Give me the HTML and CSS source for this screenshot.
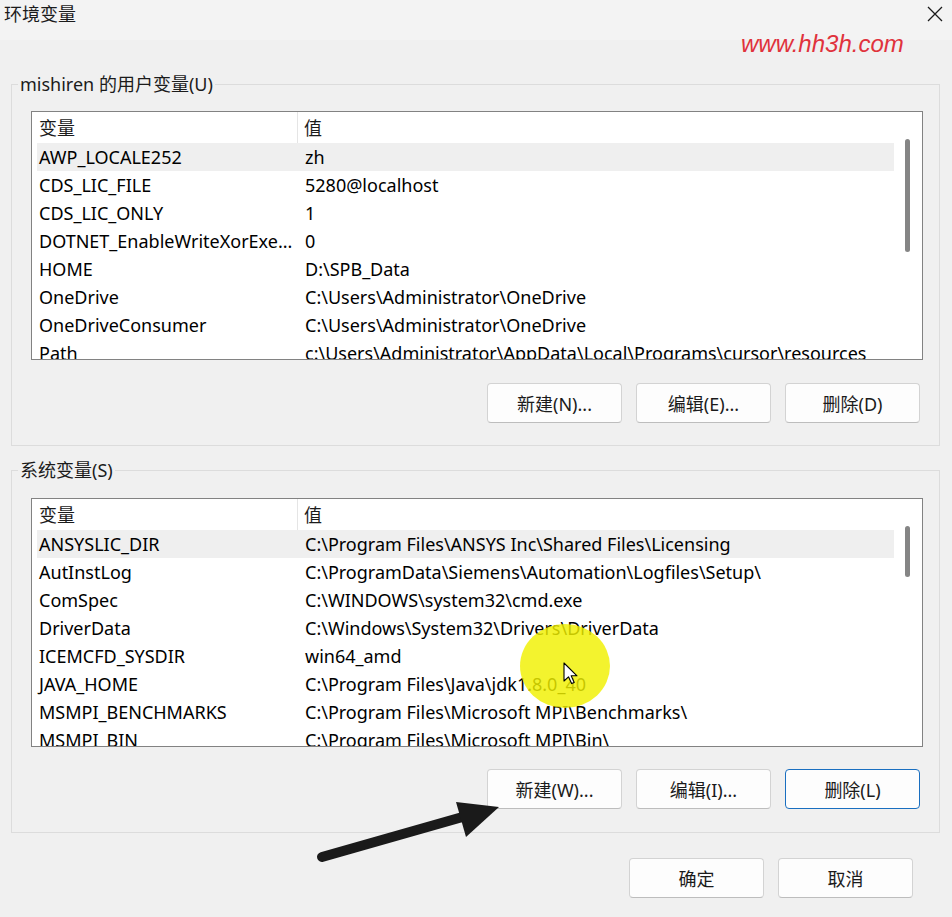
FILE: index.html
```html
<!DOCTYPE html>
<html lang="zh-CN">
<head>
  <meta charset="UTF-8">
  <meta name="viewport" content="width=device-width, initial-scale=1.0">
  <title>环境变量</title>
  <link rel="stylesheet" href="styles.css">
</head>
<body>
  <div class="titlebar">
    <span class="title">环境变量</span>
    <svg class="close" xmlns="http://www.w3.org/2000/svg" width="16" height="16" viewBox="0 0 16 16">
      <path d="M1 1L15 15M15 1L1 15" stroke="#1b1b1b" stroke-width="1.3" fill="none"/>
    </svg>
  </div>

  <div class="dialog">
    <fieldset class="group user-group">
      <legend>mishiren 的用户变量(U)</legend>
      <div class="list">
        <div class="list-body">
          <div class="list-head">
            <div class="cell name">变量</div>
            <div class="cell value">值</div>
          </div>
          <div class="row selected"><div class="cell name">AWP_LOCALE252</div><div class="cell value">zh</div></div>
          <div class="row"><div class="cell name">CDS_LIC_FILE</div><div class="cell value">5280@localhost</div></div>
          <div class="row"><div class="cell name">CDS_LIC_ONLY</div><div class="cell value">1</div></div>
          <div class="row"><div class="cell name">DOTNET_EnableWriteXorExe...</div><div class="cell value">0</div></div>
          <div class="row"><div class="cell name">HOME</div><div class="cell value">D:\SPB_Data</div></div>
          <div class="row"><div class="cell name">OneDrive</div><div class="cell value">C:\Users\Administrator\OneDrive</div></div>
          <div class="row"><div class="cell name">OneDriveConsumer</div><div class="cell value">C:\Users\Administrator\OneDrive</div></div>
          <div class="row"><div class="cell name">Path</div><div class="cell value">c:\Users\Administrator\AppData\Local\Programs\cursor\resources</div></div>
        </div>
        <div class="scrollbar"><div class="thumb user-thumb"></div></div>
      </div>
      <div class="button-row">
        <button>新建(N)...</button>
        <button>编辑(E)...</button>
        <button>删除(D)</button>
      </div>
    </fieldset>

    <fieldset class="group system-group">
      <legend>系统变量(S)</legend>
      <div class="list">
        <div class="list-body">
          <div class="list-head">
            <div class="cell name">变量</div>
            <div class="cell value">值</div>
          </div>
          <div class="row selected"><div class="cell name">ANSYSLIC_DIR</div><div class="cell value">C:\Program Files\ANSYS Inc\Shared Files\Licensing</div></div>
          <div class="row"><div class="cell name">AutInstLog</div><div class="cell value">C:\ProgramData\Siemens\Automation\Logfiles\Setup\</div></div>
          <div class="row"><div class="cell name">ComSpec</div><div class="cell value">C:\WINDOWS\system32\cmd.exe</div></div>
          <div class="row"><div class="cell name">DriverData</div><div class="cell value">C:\Windows\System32\Drivers\DriverData</div></div>
          <div class="row"><div class="cell name">ICEMCFD_SYSDIR</div><div class="cell value">win64_amd</div></div>
          <div class="row"><div class="cell name">JAVA_HOME</div><div class="cell value">C:\Program Files\Java\jdk1.8.0_40</div></div>
          <div class="row"><div class="cell name">MSMPI_BENCHMARKS</div><div class="cell value">C:\Program Files\Microsoft MPI\Benchmarks\</div></div>
          <div class="row"><div class="cell name">MSMPI_BIN</div><div class="cell value">C:\Program Files\Microsoft MPI\Bin\</div></div>
        </div>
        <div class="scrollbar"><div class="thumb system-thumb"></div></div>
      </div>
      <div class="button-row">
        <button>新建(W)...</button>
        <button>编辑(I)...</button>
        <button class="focused">删除(L)</button>
      </div>
    </fieldset>

    <div class="dialog-buttons">
      <button>确定</button>
      <button>取消</button>
    </div>
  </div>

  <!-- overlays from the screen recording -->
  <div class="watermark">www.hh3h.com</div>
  <div class="spotlight"></div>
  <svg class="cursor" xmlns="http://www.w3.org/2000/svg" width="16" height="24" viewBox="0 0 16 24">
    <path d="M1 1V19L5.5 14.8L8.6 21.6L11.2 20.4L8.2 13.8H14Z" fill="#fff" stroke="#000" stroke-width="1.1" stroke-linejoin="round"/>
  </svg>
  <svg class="arrow" xmlns="http://www.w3.org/2000/svg" width="200" height="80" viewBox="0 0 200 80">
    <line x1="12" y1="67" x2="156" y2="26" stroke="#1a1a1a" stroke-width="10" stroke-linecap="round"/>
    <polygon points="146,12 189,17 156,47" fill="#1a1a1a"/>
  </svg>
</body>
</html>
```

FILE: styles.css
```css
body {
  margin: 0;
  width: 952px;
  height: 917px;
  position: relative;
  overflow: hidden;
  background: #f0f0f0;
  font-family: "Noto Sans", "Noto Sans CJK SC", sans-serif;
  font-size: 18px;
  color: #1b1b1b;
}

.titlebar {
  height: 40px;
  display: flex;
  justify-content: space-between;
  align-items: flex-start;
  background: #f3f3f3;
}

.title {
  margin: 2px 0 0 4px;
  line-height: 24px;
}

.close {
  margin: 6px 9px 0 0;
}

.dialog {
  padding: 0 12px 0 11px;
}

.group {
  margin: 0;
  padding: 14px 16px 22px 19px;
  border: 1px solid #dcdcdc;
  border-radius: 0;
}

.group legend {
  margin-left: -13px;
  padding: 0 2px;
  line-height: 24px;
}

.user-group {
  margin-top: 32px;
  padding-top: 15px;
}

.system-group {
  margin-top: 12px;
  padding-top: 16px;
  padding-bottom: 23px;
}

.list {
  display: flex;
  width: 890px;
  height: 247px;
  border: 1px solid #828282;
  background: #fff;
  overflow: hidden;
}

.list-body {
  width: 862px;
  overflow: hidden;
}

.list-head {
  display: flex;
  height: 31px;
  align-items: center;
}

.list-head .name {
  width: 266px;
  padding-left: 7px;
  box-sizing: border-box;
  border-right: 1px solid #e5e5e5;
  height: 31px;
  line-height: 32px;
}

.list-head .value {
  padding-left: 6px;
  line-height: 32px;
}

.row {
  display: flex;
  height: 28px;
  line-height: 28px;
  margin-left: 5px;
  color: #000;
  white-space: nowrap;
}

.row.selected {
  background: #efefef;
}

.row .name {
  width: 261px;
  padding-left: 2px;
  box-sizing: border-box;
}

.row .value {
  padding-left: 7px;
}

.scrollbar {
  flex: 1;
  position: relative;
}

.thumb {
  width: 5px;
  margin: 27px 0 0 11px;
  border-radius: 3px;
  background: #858585;
}

.user-thumb {
  height: 113px;
}

.system-thumb {
  height: 51px;
}

.button-row {
  display: flex;
  justify-content: flex-end;
  gap: 14px;
  width: 889px;
  margin-top: 23px;
}

.system-group .button-row {
  margin-top: 22px;
}

button {
  width: 135px;
  height: 40px;
  padding: 0;
  font-family: inherit;
  font-size: 18px;
  color: #1b1b1b;
  background: #fdfdfd;
  border: 1px solid #d3d3d3;
  border-bottom-color: #bdbdbd;
  border-radius: 4px;
}

button.focused {
  border: 1px solid #1a6fc0;
}

.dialog-buttons {
  display: flex;
  justify-content: flex-end;
  gap: 14px;
  margin: 25px 27px 0 0;
}

.watermark {
  position: absolute;
  left: 741px;
  top: 30px;
  font-family: "Liberation Sans", sans-serif;
  font-style: italic;
  font-size: 24px;
  color: #e0323c;
}

.spotlight {
  position: absolute;
  left: 520px;
  top: 624px;
  width: 90px;
  height: 84px;
  border-radius: 50%;
  background: rgba(240, 240, 0, 0.82);
}

.cursor {
  position: absolute;
  left: 563px;
  top: 662px;
}

.arrow {
  position: absolute;
  left: 310px;
  top: 790px;
}
```
